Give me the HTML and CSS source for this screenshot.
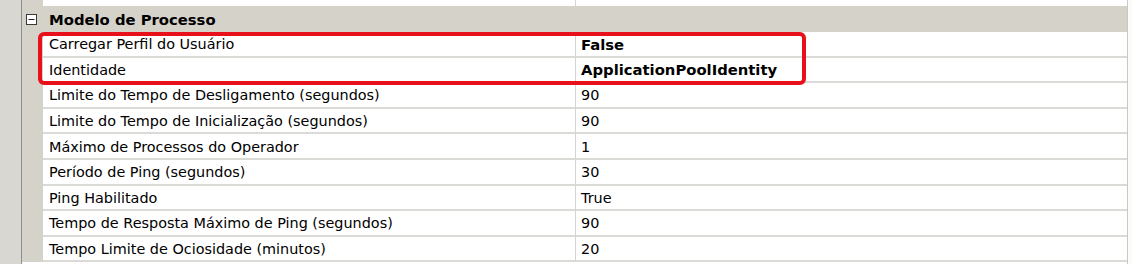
FILE: index.html
```html
<!DOCTYPE html>
<html lang="pt">
<head>
<meta charset="utf-8">
<title>Modelo de Processo</title>
<link rel="stylesheet" href="styles.css">
</head>
<body>
<div class="frame">
  <div class="edge"></div>
  <div class="grid">
    <div class="row tail"><div class="indent"></div><div class="label"></div><div class="value"></div></div>
    <div class="row category">
      <div class="indent">
        <svg class="toggle" width="11" height="11" viewBox="0 0 11 11"><rect x="0.5" y="0.5" width="10" height="10" fill="#fff" stroke="#3a3a3a"/><line x1="2.5" y1="5.5" x2="8.5" y2="5.5" stroke="#222"/></svg>
      </div>
      <div class="cat-title">Modelo de Processo</div>
    </div>
    <div class="group highlighted">
      <div class="row"><div class="indent"></div><div class="label">Carregar Perfil do Usuário</div><div class="value strong">False</div></div>
      <div class="row"><div class="indent"></div><div class="label">Identidade</div><div class="value strong">ApplicationPoolIdentity</div></div>
    </div>
    <div class="row"><div class="indent"></div><div class="label">Limite do Tempo de Desligamento (segundos)</div><div class="value">90</div></div>
    <div class="row"><div class="indent"></div><div class="label">Limite do Tempo de Inicialização (segundos)</div><div class="value">90</div></div>
    <div class="row"><div class="indent"></div><div class="label">Máximo de Processos do Operador</div><div class="value">1</div></div>
    <div class="row"><div class="indent"></div><div class="label">Período de Ping (segundos)</div><div class="value">30</div></div>
    <div class="row"><div class="indent"></div><div class="label">Ping Habilitado</div><div class="value">True</div></div>
    <div class="row"><div class="indent"></div><div class="label">Tempo de Resposta Máximo de Ping (segundos)</div><div class="value">90</div></div>
    <div class="row"><div class="indent"></div><div class="label">Tempo Limite de Ociosidade (minutos)</div><div class="value">20</div></div>
  </div>
</div>
</body>
</html>
```

FILE: styles.css
```css
html, body {
  margin: 0;
  padding: 0;
  background: #fbfcfa;
}
body {
  font-family: "DejaVu Sans", "Noto Sans", sans-serif;
  font-size: 14.4px;
  color: #000;
}
.frame {
  display: flex;
  height: 264px;
  overflow: hidden;
}
.edge {
  width: 21px;
  flex: none;
  background: #d9d7d1;
  border-right: 1px solid #8f8f8c;
}
.grid {
  width: 1105px;
  flex: none;
  background: #fff;
  border-right: 1px solid #c6cbbf;
}
.row {
  display: flex;
  height: 25.6px;
}
.row.tail {
  height: 6px;
}
.row.category {
  height: 26px;
  background: #d5d2ca;
}
.indent {
  width: 21px;
  flex: none;
  background: #d5d2ca;
  display: flex;
  align-items: center;
  padding-left: 4px;
  box-sizing: border-box;
}
.toggle {
  display: block;
  margin-top: 1px;
}
.cat-title {
  padding-left: 6px;
  display: flex;
  align-items: center;
  font-weight: bold;
  font-size: 14.8px;
}
.label, .value {
  box-sizing: border-box;
  display: flex;
  align-items: center;
  border-bottom: 2px solid #dcdad6;
  padding-top: 1px;
  white-space: nowrap;
}
.tail .label, .tail .value {
  border-bottom: none;
}
.label {
  width: 533px;
  flex: none;
  padding-left: 6px;
  border-right: 1px solid #d6d4cf;
}
.value {
  flex: 1;
  padding-left: 5px;
}
.value.strong {
  font-weight: bold;
  font-size: 14.8px;
}
.group {
  position: relative;
}
.highlighted::after {
  content: "";
  position: absolute;
  left: 16px;
  top: 0;
  width: 768px;
  height: 53px;
  box-sizing: border-box;
  border: 4px solid #e8101a;
  border-radius: 6px;
  pointer-events: none;
}
```
